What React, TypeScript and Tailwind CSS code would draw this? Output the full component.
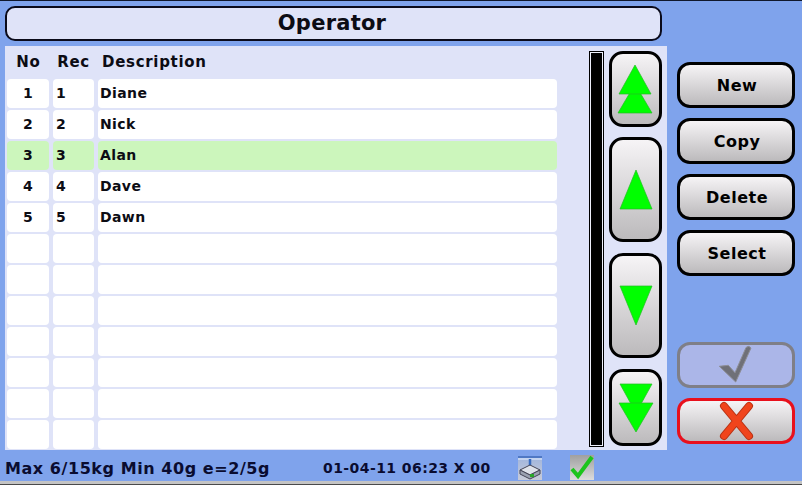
import type { ReactNode } from "react";

const rows = [
  { no: "1", rec: "1", desc: "Diane" },
  { no: "2", rec: "2", desc: "Nick" },
  { no: "3", rec: "3", desc: "Alan", selected: true },
  { no: "4", rec: "4", desc: "Dave" },
  { no: "5", rec: "5", desc: "Dawn" },
  { no: "", rec: "", desc: "" },
  { no: "", rec: "", desc: "" },
  { no: "", rec: "", desc: "" },
  { no: "", rec: "", desc: "" },
  { no: "", rec: "", desc: "" },
  { no: "", rec: "", desc: "" },
  { no: "", rec: "", desc: "" },
];

function Arrow({ points }: { points: string }) {
  return <polygon points={points} fill="#00ff00" stroke="#22bb22" strokeWidth="0.7" />;
}

function ScrollButton({ height, children }: { height: string; children: ReactNode }) {
  return (
    <div className={`${height} w-[53px] rounded-[14px] border-[3px] border-black bg-gradient-to-b from-[#f6f4f6] to-[#bcbabc] flex items-center justify-center`}>
      {children}
    </div>
  );
}

function ActionButton({ label }: { label: string }) {
  return (
    <div className="h-[46px] w-[118px] rounded-[13px] border-[3px] border-black bg-gradient-to-b from-[#f6f4f6] to-[#bcbabc] flex items-center justify-center pl-[2px] pt-[2px] text-[16px] font-bold tracking-[0.5px] text-black">
      {label}
    </div>
  );
}

export default function App() {
  return (
    <div className="w-[802px] h-[485px] overflow-hidden bg-[#7fa3ec] flex flex-col font-['DejaVu_Sans',sans-serif]">
      <div className="h-px bg-[#10182c]" />
      <div className="flex flex-1 min-h-0">
        <div className="w-[667px] flex flex-col">
          <div className="ml-[5px] mt-[5px] h-[35px] w-[657px] rounded-[10px] border-2 border-[#0a0a1a] bg-[#dfe3f8] flex items-center justify-center pr-[3px] text-[21px] font-bold tracking-[0.25px] text-[#0c0c14]">
            Operator
          </div>
          <div className="ml-[5px] mt-[5px] w-[662px] h-[404px] bg-[#dfe3f8] flex">
            <div className="w-[552px] ml-[2px]">
              <div className="h-[33px] flex items-center text-[15px] font-bold tracking-[0.7px] text-[#0c0c14]">
                <span className="w-[43px] text-center">No</span>
                <span className="w-[47px] text-center">Rec</span>
                <span className="ml-[5px]">Description</span>
              </div>
              <div className="flex flex-col gap-[2px]">
                {rows.map((row, i) => {
                  const bg = row.selected ? "bg-[#ccf6bc]" : "bg-white";
                  return (
                    <div key={i} className="flex h-[29px] gap-[4px] text-[14px] font-bold tracking-[0.4px] text-[#0c0c14]">
                      <div className={`${bg} w-[42px] rounded-[4px] flex items-center justify-center`}>{row.no}</div>
                      <div className={`${bg} w-[41px] rounded-[4px] flex items-center pl-[3px]`}>{row.rec}</div>
                      <div className={`${bg} w-[459px] rounded-[4px] flex items-center pl-[2px]`}>{row.desc}</div>
                    </div>
                  );
                })}
              </div>
            </div>
            <div className="ml-[30px] mt-[5px] h-[396px] w-[15px] border border-black bg-black shadow-[inset_0_0_0_1px_#eef0fc]" />
            <div className="ml-[5px] mt-[5px] flex flex-col">
              <ScrollButton height="h-[76px]">
                <svg width="38" height="50" viewBox="0 0 38 50">
                  <Arrow points="1,49 18,20 35,49" />
                  <Arrow points="2,30 18,1 34,30" />
                </svg>
              </ScrollButton>
              <div className="h-[10px]" />
              <ScrollButton height="h-[105px]">
                <svg width="34" height="42" viewBox="0 0 34 42">
                  <Arrow points="1,40 17,1 33,40" />
                </svg>
              </ScrollButton>
              <div className="h-[11px]" />
              <ScrollButton height="h-[105px]">
                <svg width="34" height="42" viewBox="0 0 34 42">
                  <Arrow points="1,1 33,1 17,40" />
                </svg>
              </ScrollButton>
              <div className="h-[11px]" />
              <ScrollButton height="h-[77px]">
                <svg width="38" height="50" viewBox="0 0 38 50">
                  <Arrow points="3,1 35,1 19,30" />
                  <Arrow points="2,20 36,20 19,49" />
                </svg>
              </ScrollButton>
            </div>
          </div>
        </div>
        <div className="ml-[10px] mt-[61px] flex flex-col">
          <div className="flex flex-col gap-[10px]">
            <ActionButton label="New" />
            <ActionButton label="Copy" />
            <ActionButton label="Delete" />
            <ActionButton label="Select" />
          </div>
          <div className="mt-[66px] h-[46px] w-[118px] rounded-[13px] border-[3px] border-[#7f7f87] bg-[#abb6e8] flex items-center justify-center">
            <svg width="36" height="40" viewBox="0 0 36 40">
              <path d="M1.3 21.3 L10.3 20.3 L17 27.7 L28 2.5 Q31 0 33 3 L17.7 37 Z" fill="#6f7078" stroke="#8d8e96" strokeWidth="1" />
            </svg>
          </div>
          <div className="mt-[10px] h-[46px] w-[118px] rounded-[13px] border-[3px] border-[#e8101c] bg-gradient-to-b from-[#f6f4f6] to-[#bcbabc] flex items-center justify-center">
            <svg width="36" height="40" viewBox="0 0 36 40">
              <path d="M6 5 L31 35 M31 5 L6 35" stroke="#b83214" strokeWidth="8" strokeLinecap="round" />
              <path d="M6 5 L31 35 M31 5 L6 35" stroke="#f0441c" strokeWidth="6" strokeLinecap="round" />
            </svg>
          </div>
        </div>
      </div>
      <div className="h-[31px] flex items-start text-[#0a0c30] font-bold">
        <span className="ml-[5px] mt-[7px] w-[318px] text-[16px] tracking-[0.56px]">Max 6/15kg Min 40g e=2/5g</span>
        <span className="mt-[8px] w-[195px] text-[14px] tracking-[0.43px]">01-04-11 06:23 X 00</span>
        <div className="mt-[6px] w-[24px] h-[24px] bg-gradient-to-b from-[#9fb4dd] to-[#c8cbd8]">
          <svg width="24" height="24" viewBox="0 0 24 24">
            <rect x="0" y="0" width="24" height="2" fill="#4f78c4" />
            <rect x="0" y="2" width="24" height="2" fill="#c4d4f0" />
            <path d="M12 3 V12" stroke="#3a6cc0" strokeWidth="2.5" />
            <path d="M2 14 L12 9 L22 14 L12 19 Z" fill="#dfe2ea" stroke="#445" strokeWidth="1" />
            <path d="M2 14 V18 L12 23 L22 18 V14 L12 19 Z" fill="#9aa0b0" stroke="#445" strokeWidth="1" />
            <rect x="12" y="18" width="4" height="3" fill="#2aa52a" />
          </svg>
        </div>
        <div className="ml-[28px] mt-[5px] w-[24px] h-[25px] bg-gradient-to-b from-[#a0a0a0] to-[#dcdcdc]">
          <svg width="24" height="25" viewBox="0 0 24 25">
            <path d="M2 14 L8 21 L22 2" fill="none" stroke="#1cc41c" strokeWidth="4" />
          </svg>
        </div>
      </div>
      <div className="h-[3px] bg-[#c4c4c4]" />
      <div className="h-px bg-[#4a4a4a]" />
    </div>
  );
}
